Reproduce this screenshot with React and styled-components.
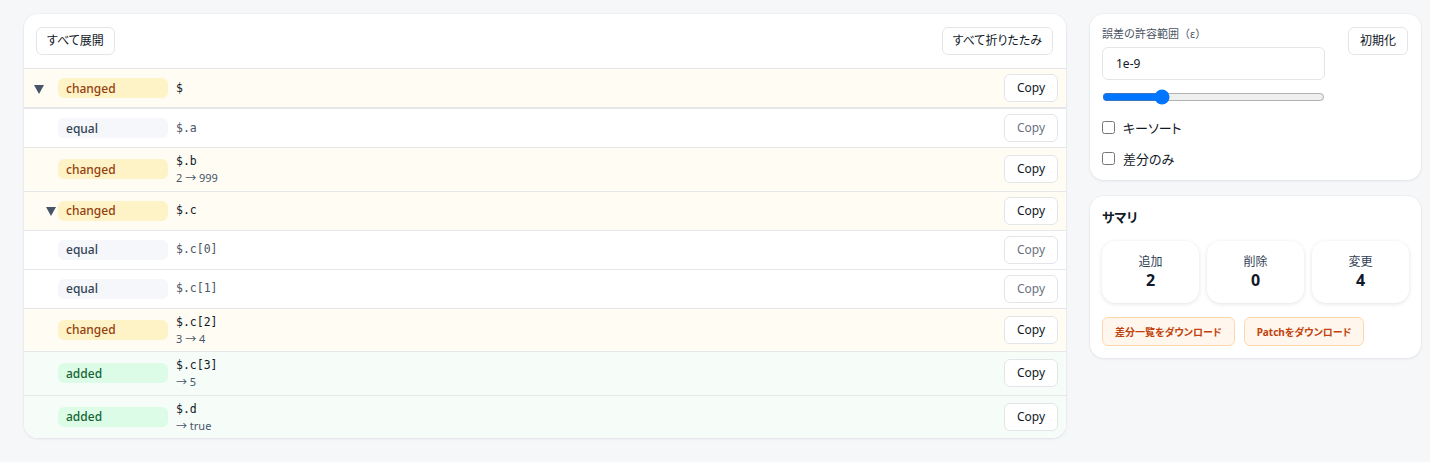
import React from "react";
import styled, { createGlobalStyle } from "styled-components";

const Global = createGlobalStyle`
  html, body { margin: 0; padding: 0; background: #f6f7f9; }
  body { font-family: "Noto Sans", "Noto Sans CJK JP", sans-serif; color: #111827; font-feature-settings: "palt"; }
  button, input { font-feature-settings: "palt"; }
  * { box-sizing: border-box; }
`;

const Page = styled.div`
  display: grid;
  grid-template-columns: 1042px 331px;
  gap: 24px;
  padding: 14px 9px 14px 24px;
  align-items: start;
`;

const Card = styled.div`
  background: #fff;
  border-radius: 14px;
  box-shadow: 0 1px 3px rgba(15, 23, 42, 0.08), 0 0 0 1px rgba(15, 23, 42, 0.02);
  overflow: hidden;
`;

const Toolbar = styled.div`
  display: flex;
  justify-content: space-between;
  align-items: center;
  padding: 13px 13px 13px 12px;
  border-bottom: 1px solid #e5e7eb;
`;

const Button = styled.button`
  font-family: "Noto Sans", "Noto Sans CJK JP", sans-serif;
  font-size: 12px;
  height: 28px;
  padding: 0 10px;
  background: #fff;
  color: ${(p) => (p.$muted ? "#6b7280" : "#111827")};
  border: 1px solid #e3e5e9;
  border-radius: 6px;
  cursor: pointer;
  line-height: 1;
`;

const Row = styled.div`
  display: flex;
  align-items: center;
  padding: 5px 8px 5px 10px;
  min-height: 38px;
  background: ${(p) => p.$bg};
  border-bottom: ${(p) => (p.$thick ? "2px solid #e5e7eb" : p.$last ? "none" : "1px solid #e5e7eb")};
`;

const ToggleCell = styled.div`
  width: 24px;
  flex: none;
  display: flex;
  align-items: center;
  height: 20px;
`;

const Toggle = styled.span`
  margin-left: ${(p) => p.$depth * 12}px;
  width: 0;
  height: 0;
  border-left: 5.5px solid transparent;
  border-right: 5.5px solid transparent;
  border-top: 9px solid #475569;
  margin-top: 2px;
`;

const Badge = styled.span`
  width: 110px;
  flex: none;
  height: 20px;
  border-radius: 6px;
  padding-left: 8px;
  display: flex;
  align-items: center;
  font-size: 12px;
  font-weight: 500;
  background: ${(p) => p.$bg};
  color: ${(p) => p.$fg};
`;

const PathCol = styled.div`
  flex: 1;
  margin-left: 8px;
  display: flex;
  flex-direction: column;
`;

const PathText = styled.span`
  font-family: "DejaVu Sans Mono", "Liberation Mono", monospace;
  font-size: 11.5px;
  line-height: 17px;
  color: ${(p) => (p.$muted ? "#4b5563" : "#111827")};
`;

const Detail = styled.span`
  font-size: 11px;
  line-height: 15.5px;
  color: #475569;
`;

const CopyButton = styled(Button)`
  width: 54px;
  padding: 0;
  flex: none;
`;

const Side = styled.div`
  display: flex;
  flex-direction: column;
  gap: 16px;
`;

const Pad = styled.div`
  padding: 12px;
`;

const Settings = styled.div`
  display: flex;
  justify-content: space-between;
  align-items: flex-start;
`;

const SettingsMain = styled.div`
  width: 223px;
  display: flex;
  flex-direction: column;
`;

const Label = styled.div`
  font-size: 11px;
  line-height: 16px;
  color: #4b5563;
  margin-bottom: 5px;
  font-feature-settings: normal;
`;

const Input = styled.input`
  height: 33px;
  width: 100%;
  border: 1px solid #e3e5e9;
  border-radius: 6px;
  padding: 0 13px;
  font-family: "Noto Sans", sans-serif;
  font-size: 12px;
  color: #111827;
  outline: none;
`;

const Range = styled.input`
  width: 223px;
  margin: 9px 0 0 0;
  height: 16px;
`;

const CheckRow = styled.label`
  display: flex;
  align-items: center;
  gap: 8px;
  height: 20px;
  font-size: 13px;
  color: #111827;
  margin-top: ${(p) => p.$mt}px;
  input { margin: 0; width: 13px; height: 13px; }
`;

const ResetButton = styled(Button)`
  margin-top: 1px;
  margin-right: 1px;
  width: 60px;
  padding: 0;
`;

const Title = styled.div`
  font-size: 13px;
  font-weight: 700;
  line-height: 18px;
  color: #111827;
`;

const Stats = styled.div`
  display: grid;
  grid-template-columns: repeat(3, 97px);
  gap: 8px;
  margin-top: 15px;
`;

const Stat = styled.div`
  height: 62px;
  border-radius: 14px;
  background: #fff;
  box-shadow: 0 1px 4px rgba(15, 23, 42, 0.12);
  display: flex;
  flex-direction: column;
  align-items: center;
  justify-content: center;
`;

const StatLabel = styled.div`
  font-size: 12px;
  line-height: 16px;
  color: #334155;
`;

const StatValue = styled.div`
  font-size: 16px;
  font-weight: 700;
  line-height: 20px;
  color: #111827;
`;

const Downloads = styled.div`
  display: flex;
  gap: 9px;
  margin-top: 14px;
`;

const DownloadButton = styled.button`
  height: 29px;
  padding: 0 12px;
  background: #fff7ed;
  border: 1px solid #fed7aa;
  border-radius: 6px;
  color: #c2410c;
  font-family: "Noto Sans", "Noto Sans CJK JP", sans-serif;
  font-size: 10px;
  font-weight: 700;
  cursor: pointer;
`;

const kinds = {
  changed: { bg: "#fffdf3", badgeBg: "#fef3c7", fg: "#92400e" },
  equal: { bg: "#ffffff", badgeBg: "#f5f7fa", fg: "#334155" },
  added: { bg: "#f6fdf9", badgeBg: "#dcfce7", fg: "#166534" },
};

const rows = [
  { kind: "changed", path: "$", toggle: 0, thick: true },
  { kind: "equal", path: "$.a" },
  { kind: "changed", path: "$.b", detail: "2 → 999" },
  { kind: "changed", path: "$.c", toggle: 1 },
  { kind: "equal", path: "$.c[0]" },
  { kind: "equal", path: "$.c[1]" },
  { kind: "changed", path: "$.c[2]", detail: "3 → 4" },
  { kind: "added", path: "$.c[3]", detail: "→ 5" },
  { kind: "added", path: "$.d", detail: "→ true" },
];

export default function App() {
  return (
    <>
      <Global />
      <Page>
        <Card>
          <Toolbar>
            <Button>すべて展開</Button>
            <Button>すべて折りたたみ</Button>
          </Toolbar>
          {rows.map((r, i) => {
            const k = kinds[r.kind];
            const muted = r.kind === "equal";
            return (
              <Row key={r.path} $bg={k.bg} $thick={r.thick} $last={i === rows.length - 1}>
                <ToggleCell>
                  {r.toggle !== undefined && <Toggle $depth={r.toggle} />}
                </ToggleCell>
                <Badge $bg={k.badgeBg} $fg={k.fg}>{r.kind}</Badge>
                <PathCol>
                  <PathText $muted={muted}>{r.path}</PathText>
                  {r.detail && <Detail>{r.detail}</Detail>}
                </PathCol>
                <CopyButton $muted={muted}>Copy</CopyButton>
              </Row>
            );
          })}
        </Card>
        <Side>
          <Card>
            <Pad>
              <Settings>
                <SettingsMain>
                  <Label>誤差の許容範囲（ε）</Label>
                  <Input defaultValue="1e-9" />
                  <Range type="range" min={-12} max={0} defaultValue={-9} />
                  <CheckRow $mt={12}>
                    <input type="checkbox" />
                    キーソート
                  </CheckRow>
                  <CheckRow $mt={11}>
                    <input type="checkbox" />
                    差分のみ
                  </CheckRow>
                </SettingsMain>
                <ResetButton>初期化</ResetButton>
              </Settings>
            </Pad>
          </Card>
          <Card>
            <Pad>
              <Title>サマリ</Title>
              <Stats>
                <Stat>
                  <StatLabel>追加</StatLabel>
                  <StatValue>2</StatValue>
                </Stat>
                <Stat>
                  <StatLabel>削除</StatLabel>
                  <StatValue>0</StatValue>
                </Stat>
                <Stat>
                  <StatLabel>変更</StatLabel>
                  <StatValue>4</StatValue>
                </Stat>
              </Stats>
              <Downloads>
                <DownloadButton>差分一覧をダウンロード</DownloadButton>
                <DownloadButton>Patchをダウンロード</DownloadButton>
              </Downloads>
            </Pad>
          </Card>
        </Side>
      </Page>
    </>
  );
}
